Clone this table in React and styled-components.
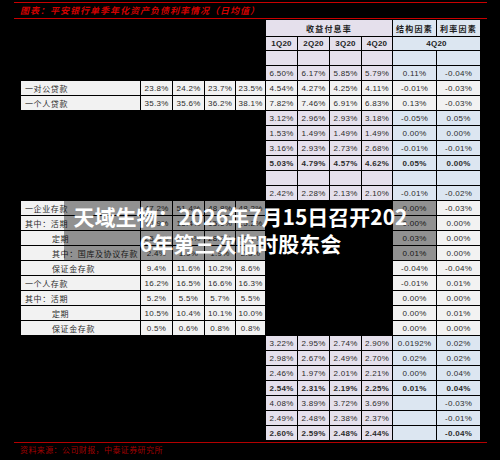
import styled, { createGlobalStyle } from "styled-components";

const GlobalStyle = createGlobalStyle`
  html, body {
    margin: 0;
    padding: 0;
    background: #000;
  }
  body {
    font-family: "Liberation Sans", "Noto Sans CJK SC", sans-serif;
  }
`;

const TONES = {
  purple: "#e5e0ec",
  blue: "#dce6f1",
  white: "#f2f2f2",
};

const topRows = [
  { right: ["6.50%", "6.17%", "5.85%", "5.79%"], factors: ["0.11%", "-0.04%"] },
  {
    label: "一对公贷款",
    left: ["23.8%", "24.2%", "23.7%", "23.5%"],
    right: ["4.54%", "4.27%", "4.25%", "4.11%"],
    factors: ["-0.01%", "-0.03%"],
    white: true,
  },
  {
    label: "一个人贷款",
    left: ["35.3%", "35.6%", "36.2%", "38.1%"],
    right: ["7.82%", "7.46%", "6.91%", "6.83%"],
    factors: ["0.13%", "-0.03%"],
    white: true,
  },
  { right: ["3.12%", "2.96%", "2.93%", "3.18%"], factors: ["-0.05%", "0.05%"] },
  { right: ["1.53%", "1.49%", "1.49%", "1.49%"], factors: ["0.00%", "0.00%"] },
  { right: ["3.16%", "2.93%", "2.73%", "2.68%"], factors: ["-0.01%", "-0.01%"] },
  { right: ["5.03%", "4.79%", "4.57%", "4.62%"], factors: ["0.05%", "0.00%"], bold: true },
  { right: ["", "", "", ""], factors: ["", ""] },
  { right: ["2.42%", "2.28%", "2.13%", "2.10%"], factors: ["-0.01%", "-0.02%"] },
];

const depositRows = [
  { label: "一企业存款", left: ["47.2%", "51.4%", "48.8%", "48.2%"], factors: ["0.00%", "-0.03%"] },
  { label: "其中：活期", left: ["16.9%", "15.4%", "15.6%", "15.2%"], factors: ["0.00%", "0.00%"] },
  { label: "定期", indent: true, left: ["25.8%", "30.3%", "28.9%", "29.7%"], factors: ["0.03%", "0.00%"] },
  { label: "其中：国库及协议存款", indent: true, left: ["2.4%", "1.9%", "1.9%", "2.3%"], factors: ["0.01%", "0.00%"] },
  { label: "保证金存款", indent: true, left: ["9.4%", "11.6%", "10.2%", "8.6%"], factors: ["-0.04%", "-0.04%"] },
  { label: "一个人存款", left: ["16.2%", "16.5%", "16.6%", "16.3%"], factors: ["-0.01%", "0.01%"] },
  { label: "其中：活期", left: ["5.2%", "5.5%", "5.7%", "5.5%"], factors: ["0.00%", "0.00%"] },
  { label: "定期", indent: true, left: ["10.5%", "10.4%", "10.1%", "10.0%"], factors: ["0.00%", "0.01%"] },
  { label: "保证金存款", indent: true, left: ["0.5%", "0.6%", "0.8%", "0.8%"], factors: ["0.00%", "0.00%"] },
].map((row) => ({ ...row, white: true }));

const costRows = [
  { right: ["3.22%", "2.95%", "2.74%", "2.90%"], factors: ["0.0192%", "0.02%"] },
  { right: ["2.98%", "2.67%", "2.49%", "2.70%"], factors: ["0.02%", "0.02%"] },
  { right: ["2.46%", "1.97%", "2.01%", "2.21%"], factors: ["0.00%", "0.04%"] },
  { right: ["2.54%", "2.31%", "2.19%", "2.25%"], factors: ["0.01%", "0.04%"], bold: true },
  { right: ["4.08%", "3.89%", "3.72%", "3.69%"], factors: ["", "-0.03%"] },
  { right: ["2.49%", "2.48%", "2.38%", "2.37%"], factors: ["", "-0.01%"] },
  { right: ["2.60%", "2.59%", "2.48%", "2.44%"], factors: ["", "-0.04%"], bold: true },
];

const dataRows = [...topRows, ...depositRows, ...costRows];

const renderRow = (row, index) => {
  const r = index + 4;
  const cells = [];

  if (row.label) {
    cells.push(
      <LabelCell key="label" $row={r} $col={1} $tone="white" $indent={row.indent}>
        {row.label}
      </LabelCell>
    );
    row.left.forEach((value, i) => {
      cells.push(
        <Cell key={`l${i}`} $row={r} $col={2 + i} $tone="white">
          {value}
        </Cell>
      );
    });
  }

  if (row.right) {
    row.right.forEach((value, i) => {
      cells.push(
        <Cell
          key={`r${i}`}
          $row={r}
          $col={6 + i}
          $tone={row.white ? "white" : "purple"}
          $bold={row.bold}
        >
          {value}
        </Cell>
      );
    });
  }

  row.factors.forEach((value, i) => {
    cells.push(
      <Cell
        key={`f${i}`}
        $row={r}
        $col={10 + i}
        $tone={row.white ? "white" : "blue"}
        $bold={row.bold}
      >
        {value}
      </Cell>
    );
  });

  return cells;
};

const App = () => {
  return (
    <>
      <GlobalStyle />
      <Page>
        <TitleBar>图表：平安银行单季年化资产负债利率情况（日均值）</TitleBar>

        <Sheet>
          <HeadCell $row={1} $col={6} $span={4} $tone="purple" $wide>
            收益付息率
          </HeadCell>
          <HeadCell $row={1} $col={10} $tone="blue" $wide>
            结构因素
          </HeadCell>
          <HeadCell $row={1} $col={11} $tone="blue" $wide>
            利率因素
          </HeadCell>

          {["1Q20", "2Q20", "3Q20", "4Q20"].map((q, i) => (
            <HeadCell key={q} $row={2} $col={6 + i} $tone="purple">
              {q}
            </HeadCell>
          ))}
          <HeadCell $row={2} $col={10} $span={2} $tone="blue">
            4Q20
          </HeadCell>

          {[0, 1, 2, 3].map((i) => (
            <Cell key={`e${i}`} $row={3} $col={6 + i} $tone="purple" />
          ))}
          <Cell $row={3} $col={10} $tone="blue" />
          <Cell $row={3} $col={11} $tone="blue" />

          {dataRows.map(renderRow)}
        </Sheet>

        <Source>资料来源：公司财报，中泰证券研究所</Source>

        <Headline>
          <HeadlineLine>天域生物：2026年7月15日召开202</HeadlineLine>
          <HeadlineLine>6年第三次临时股东会</HeadlineLine>
        </Headline>
      </Page>
    </>
  );
};

export default App;

const Page = styled.div`
  position: relative;
  width: 500px;
  height: 460px;
  box-sizing: border-box;
  padding: 2px 13px 0 14px;
  background: #000;
  overflow: hidden;
`;

const TitleBar = styled.div`
  height: 15px;
  padding-left: 6px;
  border-top: 1px solid #c80000;
  border-bottom: 1px solid #c80000;
  color: #d00000;
  font-family: "Noto Sans CJK SC", sans-serif;
  font-size: 9px;
  font-style: italic;
  font-weight: 700;
  line-height: 15px;
  letter-spacing: 1px;
  white-space: nowrap;
`;

const Sheet = styled.div`
  display: grid;
  grid-template-columns: 119px 31px 31px 30px 29px 31px 31px 31px 30px 43px 43px;
  grid-template-rows: 16px 13px 14px repeat(25, 14px);
  gap: 1px;
  width: max-content;
  margin-left: 6px;
  padding: 1px;
  background: #000;
`;

const Cell = styled.div`
  grid-row: ${(p) => p.$row};
  grid-column: ${(p) => p.$col} / span ${(p) => p.$span || 1};
  display: flex;
  align-items: center;
  justify-content: center;
  background: ${(p) => TONES[p.$tone]};
  color: #2b2b2b;
  font-size: 8px;
  font-weight: ${(p) => (p.$bold ? 700 : 400)};
  letter-spacing: 0.3px;
  white-space: nowrap;
  overflow: hidden;
`;

const LabelCell = styled(Cell)`
  justify-content: flex-start;
  padding-left: ${(p) => (p.$indent ? 31 : 4)}px;
  font-family: "Noto Sans CJK SC", sans-serif;
  letter-spacing: 0.6px;
`;

const HeadCell = styled(Cell)`
  font-family: "Liberation Sans", "Noto Sans CJK SC", sans-serif;
  font-weight: 700;
  letter-spacing: ${(p) => (p.$wide ? "1.2px" : "0.2px")};
  color: #222;
`;

const Source = styled.div`
  margin-top: 1px;
  padding: 1px 0 0 6px;
  border-top: 1px solid #b40000;
  color: #a00000;
  font-family: "Noto Sans CJK SC", sans-serif;
  font-size: 8px;
  line-height: 12px;
  letter-spacing: 0.4px;
  white-space: nowrap;
`;

const Headline = styled.div`
  position: absolute;
  top: 200px;
  left: 64px;
  width: 373px;
  height: 60px;
  box-sizing: border-box;
  padding: 3px 20px 0 0;
  background: rgba(0, 0, 0, 0.4);
  color: #fff;
  font-family: "Noto Sans CJK SC", sans-serif;
  font-size: 21px;
  font-weight: 700;
  line-height: 27px;
  text-align: center;
`;

const HeadlineLine = styled.div`
  white-space: nowrap;
`;
